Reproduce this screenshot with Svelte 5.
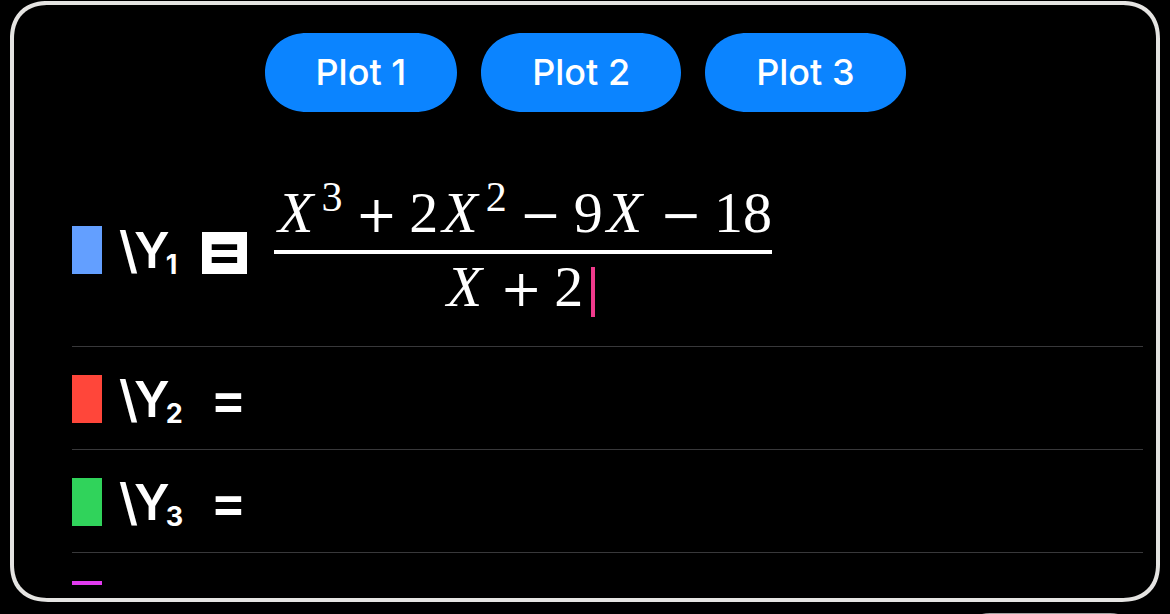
<script>
  const plots = [1, 2, 3];
  const functions = [
    { index: 1, color: '#639fff', enabled: true, entered: true },
    { index: 2, color: '#ff463a', enabled: false, entered: false },
    { index: 3, color: '#30d35b', enabled: false, entered: false },
    { index: 4, color: '#e23bf0', enabled: false, entered: false }
  ];
  let rows = $state(functions);
</script>

<div class="app">
  <main class="screen">
    <div class="viewport">
      <nav class="plots">
        {#each plots as plot}
          <button class="plot">Plot {plot}</button>
        {/each}
      </nav>

      <ul class="rows">
        {#each rows as row}
          <li class="row" class:entered={row.entered}>
            <button class="swatch" aria-label="Line color" style:background={row.color}></button>
            <span class="name">\Y<sub>{row.index}</sub></span>
            <button class="equals" class:on={row.enabled} onclick={() => (row.enabled = !row.enabled)}>=</button>
            {#if row.entered}
              <div class="fraction">
                <div class="numerator">
                  <i>X</i><sup>3</sup><span class="op">+</span>2<i>X</i><sup>2</sup><span class="op">−</span>9<i>X</i><span class="op">−</span>18
                </div>
                <div class="denominator">
                  <i>X</i><span class="op">+</span>2<span class="cursor"></span>
                </div>
              </div>
            {/if}
          </li>
        {/each}
      </ul>
    </div>
  </main>
  <footer class="keys">
    <button class="key" aria-label="Next"></button>
  </footer>
</div>

<style>
  :global(body) {
    margin: 0;
    background: #000;
  }

  .app {
    box-sizing: border-box;
    height: 100vh;
    padding: 1px 10px 0;
    display: flex;
    flex-direction: column;
    overflow: hidden;
    background: #000;
    color: #fff;
    font-family: Inter, sans-serif;
  }

  button {
    box-sizing: border-box;
    margin: 0;
    padding: 0;
    border: 0;
    background: none;
    color: inherit;
    font: inherit;
  }

  .screen {
    flex: 1;
    min-height: 0;
    box-sizing: border-box;
    display: flex;
    padding: 0 13px 13px 58px;
    border: 4px solid #e5e4e2;
    border-radius: 38px;
    corner-shape: superellipse(1.2);
  }

  .viewport {
    flex: 1;
    min-width: 0;
    overflow-y: auto;
    scrollbar-width: none;
  }

  .plots {
    display: flex;
    justify-content: center;
    gap: 24px;
    padding: 28px 45px 0 0;
  }

  .plot {
    height: 79px;
    padding: 0 51px 2px;
    border-radius: 42px / 40px;
    corner-shape: superellipse(1.05);
    background: #0b84ff;
    font-size: 36px;
    font-weight: 500;
  }

  .rows {
    margin: 42px 0 0;
    padding: 0;
    list-style: none;
  }

  .row {
    box-sizing: border-box;
    min-height: 103px;
    display: flex;
    align-items: center;
    padding-top: 2px;
    border-bottom: 1px solid #38383a;
  }

  .entered {
    min-height: 193px;
    padding-top: 0;
  }

  .swatch {
    width: 30px;
    height: 48px;
  }

  .name {
    width: 80px;
    margin-left: 17px;
    font-size: 50px;
    font-weight: 600;
    line-height: 60px;
    white-space: nowrap;
  }

  .name sub {
    position: relative;
    top: 6px;
    margin-left: -4px;
    font-size: 27px;
    font-weight: 700;
    line-height: 1;
    vertical-align: baseline;
  }

  .equals {
    width: 45px;
    height: 42px;
    margin: 6px 0 0 7px;
    padding-bottom: 6px;
    font-size: 54px;
    font-weight: 600;
    line-height: 36px;
  }

  .equals.on {
    margin-left: 3px;
    background: #fff;
    color: #000;
  }

  .fraction {
    margin-left: 27px;
    font-family: "Liberation Serif", serif;
    font-size: 58px;
    line-height: 66px;
    text-align: center;
  }

  .numerator,
  .denominator {
    display: flex;
    justify-content: center;
    align-items: baseline;
  }

  .numerator {
    padding-bottom: 4px;
    border-bottom: 4px solid #fff;
  }

  .denominator {
    padding-right: 8px;
  }

  .fraction i {
    margin: 0 6px 0 4px;
  }

  .fraction sup {
    align-self: flex-start;
    margin: 0 1px 0 2px;
    font-size: 42px;
    line-height: 34px;
  }

  .op {
    margin: 0 12px;
    font-family: "DejaVu Serif", serif;
    font-size: 50px;
    line-height: 1;
  }

  .cursor {
    align-self: center;
    width: 4px;
    height: 50px;
    margin: 10px 0 0 8px;
    background: #f03a8c;
  }

  .keys {
    height: 12px;
    display: flex;
    justify-content: flex-end;
    padding: 0 20px 0 0;
  }

  .key {
    flex: none;
    width: 180px;
    height: 70px;
    margin-top: 11px;
    border: 2px solid #a0a09e;
    border-radius: 30px;
  }
</style>
